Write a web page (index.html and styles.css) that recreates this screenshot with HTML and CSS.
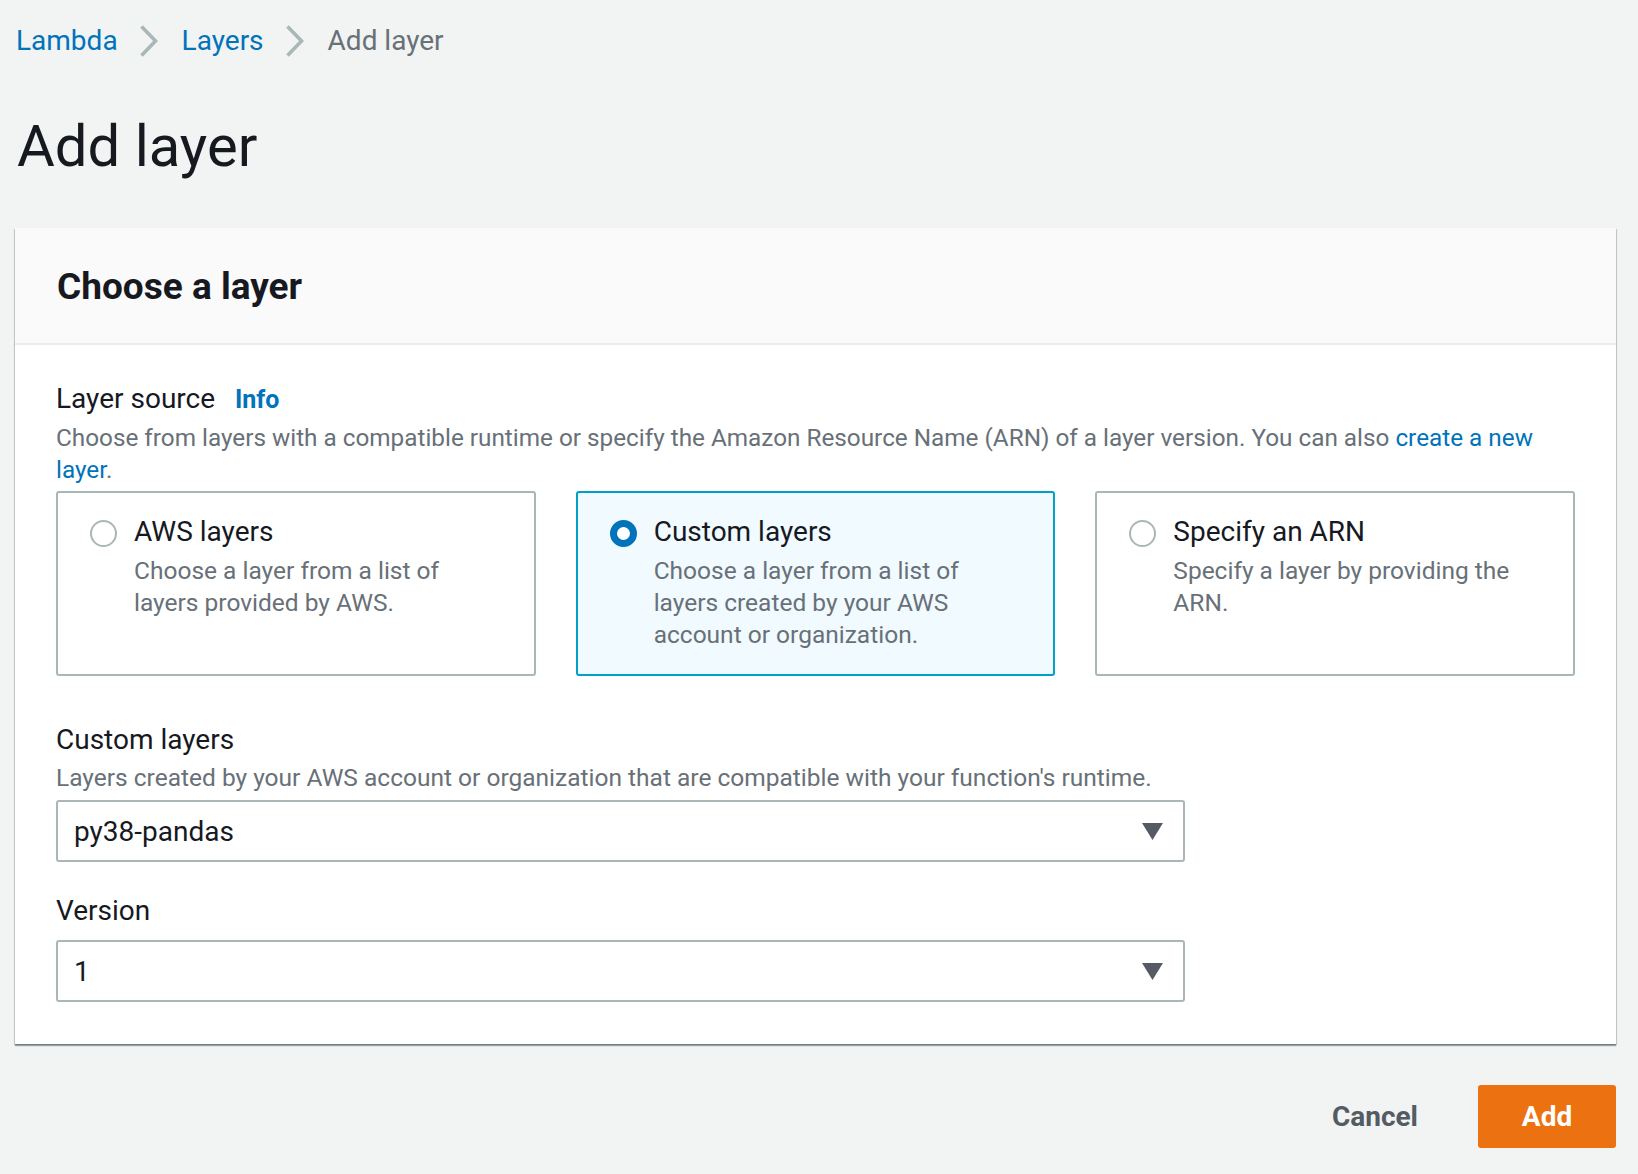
FILE: index.html
```html
<!DOCTYPE html>
<html lang="en">
<head>
<meta charset="utf-8">
<title>Add layer</title>
<link rel="stylesheet" href="styles.css">
</head>
<body>
<div class="page">
  <nav class="breadcrumbs">
    <a class="crumb-link" href="#">Lambda</a>
    <svg class="chev" viewBox="0 0 18 32" width="18" height="32" aria-hidden="true"><polyline points="1.5,1.5 15.5,16 1.5,30.5" /></svg>
    <a class="crumb-link" href="#">Layers</a>
    <svg class="chev" viewBox="0 0 18 32" width="18" height="32" aria-hidden="true"><polyline points="1.5,1.5 15.5,16 1.5,30.5" /></svg>
    <span class="crumb-current">Add layer</span>
  </nav>

  <h1 class="page-title">Add layer</h1>

  <section class="card">
    <header class="card-header">
      <h2 class="card-title">Choose a layer</h2>
    </header>
    <div class="card-body">
      <div class="field">
        <div class="label-row">
          <span class="label">Layer source</span>
          <a class="info" href="#">Info</a>
        </div>
        <p class="desc">Choose from layers with a compatible runtime or specify the Amazon Resource Name (ARN) of a layer version. You can also <a class="link" href="#">create a new</a> <a class="link" href="#">layer</a>.</p>
        <div class="tiles">
          <div class="tile">
            <span class="radio"></span>
            <div class="tile-text">
              <div class="tile-title">AWS layers</div>
              <div class="tile-desc">Choose a layer from a list of layers provided by AWS.</div>
            </div>
          </div>
          <div class="tile tile-selected">
            <span class="radio radio-checked"></span>
            <div class="tile-text">
              <div class="tile-title">Custom layers</div>
              <div class="tile-desc">Choose a layer from a list of layers created by your AWS account or organization.</div>
            </div>
          </div>
          <div class="tile">
            <span class="radio"></span>
            <div class="tile-text">
              <div class="tile-title">Specify an ARN</div>
              <div class="tile-desc">Specify a layer by providing the ARN.</div>
            </div>
          </div>
        </div>
      </div>

      <div class="field field-custom">
        <div class="label-row"><span class="label">Custom layers</span></div>
        <p class="desc desc-field">Layers created by your AWS account or organization that are compatible with your function's runtime.</p>
        <div class="select">
          <span class="select-value">py38-pandas</span>
          <svg class="caret" viewBox="0 0 21 17" width="21" height="17" aria-hidden="true"><polygon points="0,0 21,0 10.5,17" /></svg>
        </div>
      </div>

      <div class="field field-version">
        <div class="label-row"><span class="label">Version</span></div>
        <div class="select select-version">
          <span class="select-value">1</span>
          <svg class="caret" viewBox="0 0 21 17" width="21" height="17" aria-hidden="true"><polygon points="0,0 21,0 10.5,17" /></svg>
        </div>
      </div>
    </div>
  </section>

  <div class="actions">
    <button class="btn btn-cancel" type="button">Cancel</button>
    <button class="btn btn-primary" type="button">Add</button>
  </div>
</div>
</body>
</html>
```

FILE: styles.css
```css
* {
  box-sizing: border-box;
}

html, body {
  margin: 0;
  padding: 0;
}

body {
  background: #f2f3f3;
  font-family: Roboto, "Liberation Sans", Arial, sans-serif;
  color: #16191f;
}

a {
  text-decoration: none;
}

.page {
  padding: 21px 22px 27px 15px;
}

/* Breadcrumbs */
.breadcrumbs {
  display: flex;
  align-items: center;
  height: 40px;
  padding-left: 1px;
  font-size: 28px;
  line-height: 40px;
}

.crumb-link {
  color: #0073bb;
}

.crumb-current {
  color: #687078;
}

.chev {
  margin: 0 24px 0 22px;
  overflow: visible;
}

.chev polyline {
  fill: none;
  stroke: #aab7b8;
  stroke-width: 3.6;
}

/* Title */
.page-title {
  margin: 50px 0 0 2px;
  font-size: 58px;
  line-height: 70px;
  font-weight: 400;
  color: #16191f;
}

/* Card */
.card {
  margin-top: 47px;
  background: #fff;
  box-shadow: 0 2px 1px 0 rgba(0, 28, 36, 0.35), 1px 1px 1px 0 rgba(0, 28, 36, 0.15), -1px 1px 1px 0 rgba(0, 28, 36, 0.15);
}

.card-header {
  background: #fafafa;
  padding: 37px 40px 34px 42px;
  border-bottom: 2px solid #eaeded;
}

.card-title {
  margin: 0;
  font-size: 37px;
  line-height: 44px;
  font-weight: 700;
  color: #16191f;
}

.card-body {
  padding: 36px 41px 42px 41px;
}

/* Fields */
.label-row {
  display: flex;
  align-items: baseline;
  gap: 20px;
}

.label {
  font-size: 28px;
  line-height: 36px;
  color: #16191f;
}

.info {
  font-size: 25px;
  font-weight: 700;
  color: #0073bb;
}

.desc {
  margin: 5px 0 0 0;
  font-size: 24.3px;
  line-height: 32px;
  color: #687078;
}

.link {
  color: #0073bb;
}

/* Tiles */
.tiles {
  display: grid;
  grid-template-columns: repeat(3, 1fr);
  column-gap: 40px;
  margin-top: 5px;
}

.tile {
  display: flex;
  align-items: flex-start;
  gap: 17px;
  min-height: 184px;
  padding: 21px 20px 23px 32px;
  border: 2px solid #aab7b8;
  border-radius: 3px;
  background: #fff;
}

.tile-selected {
  border-color: #00a1c9;
  background: #f1faff;
}

.radio {
  flex: none;
  width: 27px;
  height: 27px;
  margin-top: 6px;
  border-radius: 50%;
  border: 2px solid #aab7b8;
  background: #fff;
}

.radio-checked {
  border: 7px solid #0073bb;
}

.tile-text {
  max-width: 360px;
}

.tile-title {
  font-size: 28px;
  line-height: 36px;
  color: #16191f;
}

.tile-desc {
  margin-top: 5px;
  font-size: 24.5px;
  line-height: 32px;
  color: #687078;
}

/* Selects */
.field-custom {
  margin-top: 46px;
}

.desc-field {
  margin-top: 4px;
  font-size: 24.5px;
}

.select {
  display: flex;
  align-items: center;
  justify-content: space-between;
  width: 1129px;
  height: 62px;
  margin-top: 6px;
  padding: 0 20px 0 16px;
  border: 2px solid #aab7b8;
  border-radius: 3px;
  background: #fff;
}

.select-value {
  font-size: 28px;
  color: #16191f;
}

.caret polygon {
  fill: #545b64;
}

.field-version {
  margin-top: 31px;
}

.select-version {
  margin-top: 11px;
}

/* Actions */
.actions {
  display: flex;
  justify-content: flex-end;
  align-items: center;
  margin-top: 41px;
}

.btn {
  font-family: Roboto, "Liberation Sans", Arial, sans-serif;
  font-size: 28px;
  font-weight: 700;
  border: none;
  cursor: pointer;
}

.btn-cancel {
  background: transparent;
  color: #545b64;
  padding: 0 20px;
  height: 63px;
  margin-right: 40px;
}

.btn-primary {
  background: #ec7211;
  color: #fff;
  height: 63px;
  width: 138px;
  border-radius: 3px;
}
```
